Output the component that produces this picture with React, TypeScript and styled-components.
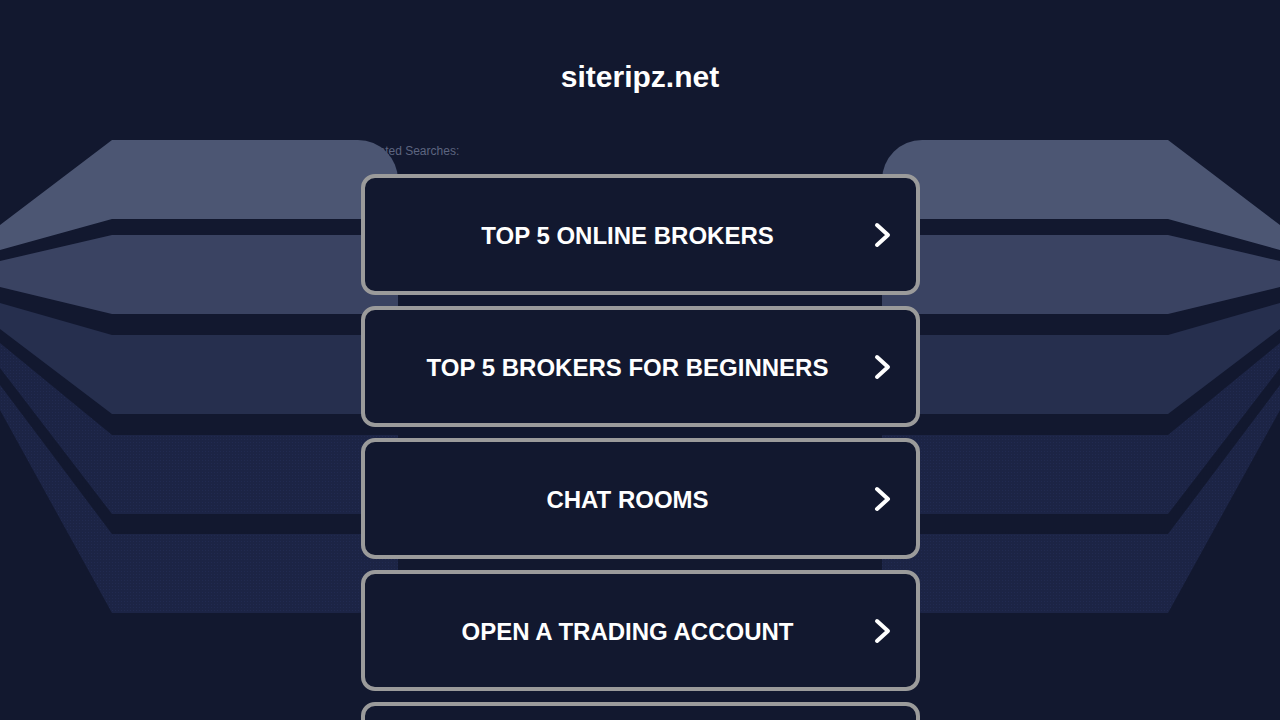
import React from "react";
import styled, { createGlobalStyle } from "styled-components";

const Global = createGlobalStyle`
  html, body {
    margin: 0;
    padding: 0;
    background: #12182f;
    font-family: "Liberation Sans", Arial, sans-serif;
    overflow: hidden;
  }
`;

const Page = styled.div`
  position: relative;
  min-height: 720px;
  display: flex;
  flex-direction: column;
  align-items: center;
`;

const Backdrop = styled.svg`
  position: absolute;
  top: 0;
  left: 0;
  z-index: 1;
  pointer-events: none;
`;

const Header = styled.header`
  position: relative;
  z-index: 2;
  padding-top: 59px;
`;

const Title = styled.h1`
  margin: 0;
  font-size: 30px;
  line-height: 36px;
  font-weight: 700;
  color: #ffffff;
  text-align: center;
`;

const Main = styled.main`
  width: 559px;
  margin-top: 48px;
`;

const Related = styled.div`
  font-size: 12px;
  line-height: 16px;
  color: #5d6580;
  margin-bottom: 15px;
`;

const List = styled.div`
  position: relative;
  z-index: 2;
  display: flex;
  flex-direction: column;
  gap: 11px;
`;

const Item = styled.a`
  box-sizing: border-box;
  height: 121px;
  display: flex;
  align-items: center;
  gap: 10px;
  padding: 0 25px 0 28px;
  border: 4px solid #9b9b9b;
  border-radius: 14px;
  background: #12182f;
  text-decoration: none;
  cursor: pointer;
`;

const Label = styled.span`
  flex: 1;
  padding-top: 2px;
  text-align: center;
  font-size: 24px;
  font-weight: 700;
  color: #ffffff;
`;

const Chevron = () => (
  <svg width="18" height="26" viewBox="0 0 18 26">
    <polyline
      points="4,3 15,13 4,23"
      fill="none"
      stroke="#ffffff"
      strokeWidth="4"
      strokeLinecap="round"
      strokeLinejoin="round"
    />
  </svg>
);

const tiers = [
  { fill: "#4c5673", pts: "0,225 112,140 420,140 420,219 112,219 0,250" },
  { fill: "#3a4362", pts: "0,261 112,235 420,235 420,314 112,314 0,287" },
  { fill: "#262f4e", pts: "0,303 112,335 420,335 420,414 112,414 0,329" },
  { fill: "url(#dots)", pts: "0,343 112,435 420,435 420,514 112,514 0,368" },
  { fill: "url(#dots)", pts: "0,385 112,534 420,534 420,613 112,613 0,410" },
];

const Wing = () => (
  <g clipPath="url(#wingClip)">
    {tiers.map((t, i) => (
      <polygon key={i} points={t.pts} fill={t.fill} />
    ))}
  </g>
);

const items = [
  "TOP 5 ONLINE BROKERS",
  "TOP 5 BROKERS FOR BEGINNERS",
  "CHAT ROOMS",
  "OPEN A TRADING ACCOUNT",
  "BEST TRADING PLATFORMS",
];

export default function App() {
  return (
    <>
      <Global />
      <Page>
        <Backdrop width="1280" height="720" viewBox="0 0 1280 720">
          <defs>
            <clipPath id="wingClip" clipPathUnits="userSpaceOnUse">
              <rect x="-60" y="140" width="458" height="473" rx="40" ry="40" />
            </clipPath>
            <pattern id="dots" width="3" height="3" patternUnits="userSpaceOnUse">
              <rect width="3" height="3" fill="#1c2445" />
              <rect x="1" y="1" width="1" height="1" fill="#212a50" />
            </pattern>
          </defs>
          <Wing />
          <g transform="translate(1280,0) scale(-1,1)">
            <Wing />
          </g>
        </Backdrop>
        <Header>
          <Title>siteripz.net</Title>
        </Header>
        <Main>
          <Related>Related Searches:</Related>
          <List>
            {items.map((label) => (
              <Item key={label}>
                <Label>{label}</Label>
                <Chevron />
              </Item>
            ))}
          </List>
        </Main>
      </Page>
    </>
  );
}
